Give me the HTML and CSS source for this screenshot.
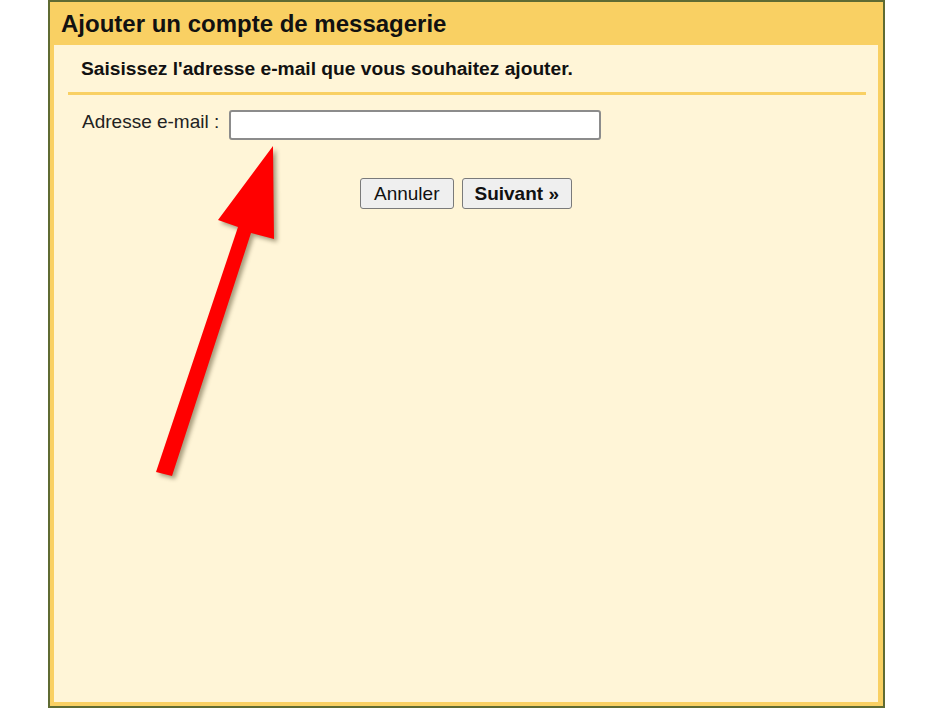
FILE: index.html
```html
<!DOCTYPE html>
<html lang="fr">

<head>
    <meta charset="UTF-8">
    <meta name="viewport" content="width=device-width, initial-scale=1.0">
    <title>Ajouter un compte de messagerie</title>
    <link rel="stylesheet" href="styles.css">
</head>

<body>
    <div class="dialog">
        <h1 class="dialog_title">Ajouter un compte de messagerie</h1>
        <div class="panel">
            <p class="intro">Saisissez l'adresse e-mail que vous souhaitez ajouter.</p>
            <div class="form_row">
                <label for="email">Adresse e-mail :</label>
                <input type="text" id="email" class="email_input">
            </div>
            <div class="actions">
                <button class="btn btn_cancel">Annuler</button>
                <button class="btn btn_next">Suivant »</button>
            </div>
        </div>
    </div>
    <!-- flèche d'annotation par-dessus la capture -->
    <svg class="pointer" width="935" height="708" viewBox="0 0 935 708">
        <polygon class="pointer_shape"
            points="273,146 274,239 251,233 172,476 156,472 238,227 218,220" />
    </svg>
</body>

</html>
```

FILE: styles.css
```css
html {
    margin: 0;
    padding: 0;
    background-color: #fff;
}

body {
    margin: 0;
    height: 708px;
    overflow: hidden;
    font-family: "Liberation Sans", Arial, sans-serif;
    color: #111;
}

.dialog {
    box-sizing: border-box;
    width: 837px;
    height: 708px;
    margin-left: 48px;
    border: 2px solid #5f6b33;
    background-color: #f9d063;
    padding: 0 5px 4px 4px;
    display: flex;
    flex-direction: column;
}

.dialog_title {
    margin: 0;
    height: 43px;
    display: flex;
    align-items: center;
    padding-left: 7px;
    font-size: 24px;
    font-weight: bold;
    color: #111;
}

.panel {
    flex: 1;
    background-color: #fff5d7;
    padding: 0 12px 0 14px;
}

.intro {
    margin: 0;
    padding: 13px 0 12px 13px;
    line-height: 22px;
    font-size: 19.2px;
    font-weight: bold;
    border-bottom: 3px solid #f9d063;
}

.form_row {
    display: flex;
    align-items: flex-start;
    margin-top: 15px;
    padding-left: 14px;
}

.form_row label {
    font-size: 19px;
    line-height: 21px;
    padding-top: 1px;
    width: 147px;
    color: #222;
}

.email_input {
    box-sizing: border-box;
    width: 372px;
    height: 30px;
    margin: 0;
    border: 2px solid #8c8c8c;
    border-radius: 3px;
    background-color: #fff;
    outline: none;
    font-size: 16px;
}

.actions {
    display: flex;
    justify-content: center;
    gap: 8px;
    margin-top: 38px;
    padding-right: 2px;
}

.btn {
    box-sizing: border-box;
    height: 31px;
    padding: 0 12px;
    font-family: "Liberation Sans", Arial, sans-serif;
    font-size: 19px;
    color: #111;
    background-color: #efefef;
    border: 1px solid #7a7a7a;
    border-radius: 3px;
    cursor: pointer;
}

.btn_cancel {
    padding: 0 13px;
}

.btn_next {
    font-weight: bold;
}

.pointer {
    position: absolute;
    top: 0;
    left: 0;
    pointer-events: none;
}

.pointer_shape {
    fill: #ff0000;
    filter: drop-shadow(3px 3px 2px rgba(60, 50, 20, 0.45));
}
```
